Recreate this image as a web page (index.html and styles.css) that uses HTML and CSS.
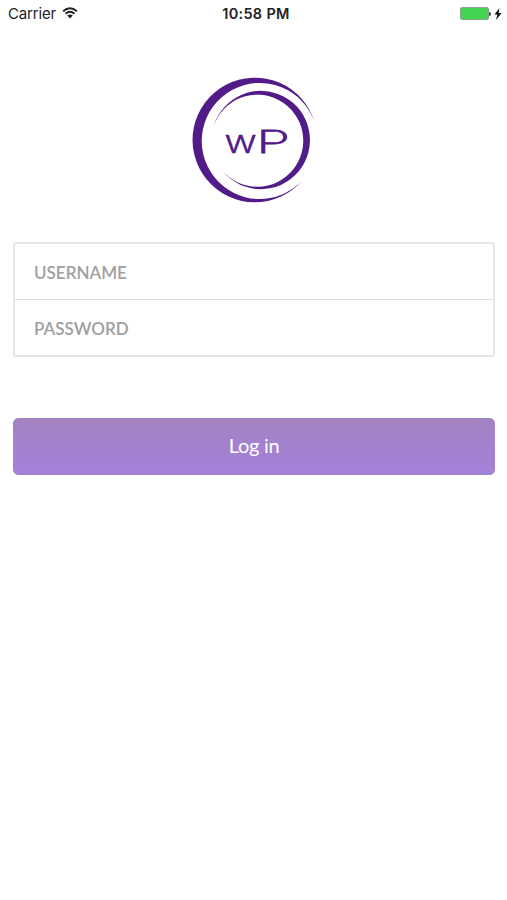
FILE: index.html
```html
<!DOCTYPE html>
<html lang="en">
<head>
<meta charset="utf-8">
<title>Log in</title>
<link rel="stylesheet" href="styles.css">
</head>
<body>
<header class="status">
  <div class="carrier"><span>Carrier</span>
    <svg class="wifi" viewBox="0 0 16 12"><path d="M1.1 4.2Q8-1.7 14.9 4.2M3.5 6.7Q8 3 12.5 6.7" fill="none" stroke="#222" stroke-width="1.9"/><path d="M5.2 8.5Q8 6.3 10.8 8.5L8 11.5Z" fill="#222"/></svg>
  </div>
  <time class="clock">10:58 PM</time>
  <div class="power">
    <span class="battery"></span><span class="terminal"></span>
    <svg class="bolt" viewBox="0 0 8 12"><path d="M5.5 0 0.5 6.5H3.4L2 12 7.5 5H4.6Z" fill="#111"/></svg>
  </div>
</header>
<main class="login">
  <svg class="logo" viewBox="0 0 420 420">
    <g fill="#521b87">
      <path d="M389 157A187 187 0 1 0 353 330A174 174 0 1 1 389 157Z"/>
      <path d="M86 168A147.5 147.5 0 1 1 112 302A138 138 0 1 0 86 168Z"/>
      <text class="mark" x="118" y="248" font-size="97" textLength="98" lengthAdjust="spacingAndGlyphs">w</text>
      <text class="mark mark-light" x="214" y="248" font-size="93" textLength="101" lengthAdjust="spacingAndGlyphs">P</text>
    </g>
  </svg>
  <form class="form">
    <div class="fields">
      <input class="field" type="text" placeholder="USERNAME" aria-label="Username">
      <input class="field" type="password" placeholder="PASSWORD" aria-label="Password">
    </div>
    <button class="submit" type="button">Log in</button>
  </form>
</main>
</body>
</html>
```
FILE: styles.css
```css
* { box-sizing: border-box; }
body { margin: 0; min-height: 900px; background: #fff; font-family: Lato, sans-serif; }
.status {
  display: grid;
  grid-template-columns: 1fr auto 1fr;
  align-items: center;
  height: 28px;
  padding: 0 5px 0 8px;
  font: 15px/28px Inter, sans-serif;
  color: #222;
}
.carrier { display: flex; align-items: center; gap: 6px; letter-spacing: -0.15px; }
.wifi { width: 16px; height: 12px; margin-top: -3px; }
.clock { font-size: 14.5px; font-weight: 600; letter-spacing: 0.3px; padding-left: 2px; }
.power { display: flex; align-items: center; justify-content: flex-end; margin-top: -1px; }
.battery { width: 29px; height: 13px; border: 1px solid #8fa391; border-radius: 2px; background: #43d551; }
.terminal { width: 2px; height: 4px; border-radius: 0 2px 2px 0; background: #444; }
.bolt { width: 8px; height: 12px; margin-left: 3px; }
.login { padding: 42px 12px 0 13px; }
.logo { display: block; width: 140px; height: 140px; margin-left: 172px; }
.mark { font-family: Inter, sans-serif; font-weight: 300; stroke: #521b87; stroke-width: 1; }
.mark-light { font-weight: 200; stroke-width: 2.5; }
.form { margin-top: 32px; }
.fields { border: 2px solid #e6e6e6; border-radius: 3px; }
.field {
  display: block;
  width: 100%;
  height: 55px;
  padding: 2px 19px 0;
  border: 0;
  outline: 0;
  background: transparent;
  font: 600 17px Lato, sans-serif;
  color: #555;
}
.field + .field { height: 56px; padding-top: 1px; border-top: 1px solid #dedede; }
.field::placeholder { color: #a0a0a0; opacity: 1; }
.submit {
  display: block;
  width: 100%;
  height: 57px;
  margin-top: 61px;
  padding: 0 0 1px;
  border: 1px solid #a383cb;
  border-radius: 5px;
  background: linear-gradient(#a383c0, #a281da);
  font: 400 20px Lato, sans-serif;
  letter-spacing: -0.3px;
  line-height: 22px;
  padding-bottom: 3px;
  color: #fff;
}
```
